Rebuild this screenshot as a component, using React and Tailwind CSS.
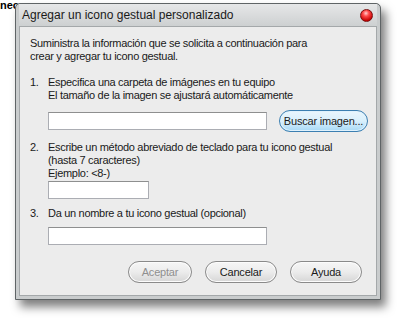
import React from 'react';

const PillButton = ({ children, disabled, primary, className = '' }) => (
  <button
    className={`h-[22px] rounded-full border text-[11px] leading-none tracking-[-0.2px] ${
      primary
        ? 'border-[#3c7fb1] bg-gradient-to-b from-[#eaf6fd] via-[#d9f0fc] to-[#a7d9f5] shadow-[inset_0_0_0_1px_#e0f2fd]'
        : 'border-[#8a8a8a] bg-gradient-to-b from-[#f6f6f6] via-[#ececec] to-[#d6d6d6] shadow-[inset_0_0_0_1px_#fcfcfc]'
    } ${disabled ? 'text-[#8f8f8f]' : 'text-[#1a1a1a]'} ${className}`}
  >
    {children}
  </button>
);

const Field = ({ className = '' }) => (
  <div className={`h-[18px] border border-[#abadb3] border-t-[#8e8f8f] bg-white ${className}`} />
);

const App = () => {
  return (
    <div
      className="relative h-[319px] w-[400px] overflow-hidden bg-white"
      style={{ fontFamily: '"Liberation Sans", Arial, sans-serif' }}
    >
      <div className="absolute left-0 top-[-3px] text-[11px] font-bold text-black">nec</div>
      <div className="relative ml-[15px] mt-[3px] w-[366px] rounded-t-[5px] border border-[#5f6466] bg-[#c9cccd] p-[3px] pt-0 shadow-[5px_7px_10px_rgba(0,0,0,0.5)]">
        <div className="flex h-[22px] items-center justify-between bg-gradient-to-b from-[#e6e7e8] to-[#cdd0d1] pl-[3px] pr-[4px]">
          <span className="text-[12px] text-[#1a1a1a]">Agregar un icono gestual personalizado</span>
          <span className="h-[13px] w-[13px] rounded-full border border-[#7a1010] bg-[radial-gradient(circle_at_45%_30%,#ffd0d0_0%,#ff4a4a_30%,#c40000_75%,#7a0000_100%)]" />
        </div>
        <div className="h-[270px] border border-[#a4a8aa] bg-[#ececec] pl-[10px] pr-[8px] pt-[10px] text-[11px] leading-[13px] tracking-[-0.3px] text-[#1a1a1a]">
          <p className="w-[300px]">
            Suministra la información que se solicita a continuación para crear y agregar tu icono gestual.
          </p>
          <div className="mt-[13px] flex">
            <span className="w-[18px]">1.</span>
            <div>
              <p>Especifica una carpeta de imágenes en tu equipo</p>
              <p>El tamaño de la imagen se ajustará automáticamente</p>
            </div>
          </div>
          <div className="mt-[8px] flex items-center pl-[18px]">
            <Field className="w-[219px]" />
            <PillButton primary className="ml-[12px] w-[89px]">Buscar imagen...</PillButton>
          </div>
          <div className="mt-[9px] flex">
            <span className="w-[18px]">2.</span>
            <div>
              <p>Escribe un método abreviado de teclado para tu icono gestual</p>
              <p>(hasta 7 caracteres)</p>
              <p>Ejemplo: &lt;8-)</p>
            </div>
          </div>
          <div className="mt-[1px] pl-[18px]">
            <Field className="w-[101px]" />
          </div>
          <div className="mt-[8px] flex">
            <span className="w-[18px]">3.</span>
            <p>Da un nombre a tu icono gestual (opcional)</p>
          </div>
          <div className="mt-[7px] pl-[18px]">
            <Field className="w-[219px]" />
          </div>
          <div className="mt-[16px] flex justify-end gap-[13px] pr-[6px]">
            <PillButton disabled className="w-[64px]">Aceptar</PillButton>
            <PillButton className="w-[72px]">Cancelar</PillButton>
            <PillButton className="w-[72px]">Ayuda</PillButton>
          </div>
        </div>
      </div>
    </div>
  );
};

export default App;
